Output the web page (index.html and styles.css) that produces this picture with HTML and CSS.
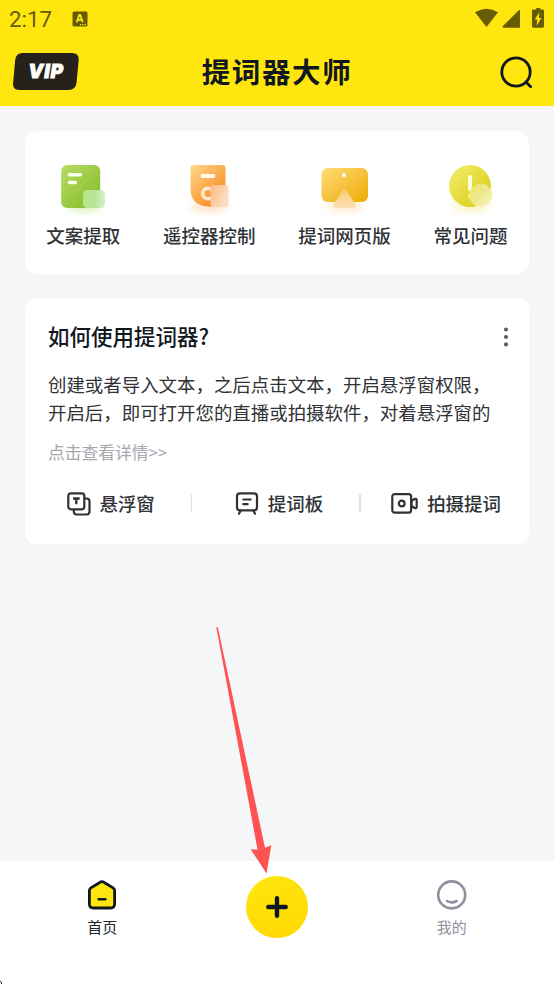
FILE: index.html
```html
<!DOCTYPE html>
<html lang="zh-CN">
<head>
<meta charset="utf-8">
<title>提词器大师</title>
<link rel="stylesheet" href="styles.css">
</head>
<body>
<div class="app">
  <header class="top">
    <div class="status">
      <span class="time">2:17</span>
      <svg class="status-app" width="16" height="16" viewBox="0 0 16 16"><rect x=".5" y=".5" width="15" height="15" rx="1.5" fill="#665c05"/><path d="M4.700 11.200 7.300 4h.9l2.600 7.200M5.800 8.900h3.900" fill="none" stroke="#ffe60f" stroke-width="1.800"/><path d="M8 13.700h1.300m1 0h1.300m1 0h1.300" stroke="#ffe60f" stroke-width="1.200"/></svg>
      <svg class="status-icons" width="72" height="22" viewBox="474 7 72 22"><g fill="#665c05"><path d="M475 12.3Q486.500 5.300 498 12.3L486.500 27Z"/><path d="M520 10V27.700H502.700V26.300L519 10Z"/><path d="M536 9.500h.2V8h4v1.500h2.500q1.300 0 1.300 1.300V26.300q0 1.400-1.300 1.400h-9.400q-1.300 0-1.300-1.400V10.800q0-1.300 1.300-1.300Z"/></g><path d="M539.300 12.500 534.700 19.500h2.600l-.6 6 4.800-7.500h-2.600Z" fill="#ffe60f"/></svg>
    </div>
    <div class="titlebar">
      <div class="vip"><svg width="66" height="38" viewBox="0 0 66 38"><path d="M9.500 0H59q7.200 0 6.700 7L63.500 30q-.8 7-8 7H7Q-.6 37 .1 30L2.200 7Q3 0 9.500 0Z" fill="#26211a"/></svg><span>VIP</span></div>
      <h1>提词器大师</h1>
      <svg class="search" width="36" height="36" viewBox="0 0 36 36" fill="none" stroke="#10171e" stroke-width="2.800"><circle cx="17" cy="17" r="14.200"/><path d="m27 27 4.700 4.700" stroke-linecap="round"/></svg>
    </div>
  </header>

  <main>
    <section class="card features">
      <div class="feature">
        <svg width="60" height="60" viewBox="53 155 60 60"><defs><linearGradient id="green" x1="0" y1="0" x2="1" y2="1"><stop stop-color="#b7dc68"/><stop offset="1" stop-color="#83ba21"/></linearGradient><linearGradient id="mint"><stop stop-color="#b6e48b"/><stop offset=".55" stop-color="#b9e59a"/><stop offset="1" stop-color="#d2f3cb"/></linearGradient><filter id="soft" x="-50%" y="-100%" width="200%" height="300%"><feGaussianBlur stdDeviation="4"/></filter></defs><ellipse cx="84" cy="206" rx="17" ry="6" fill="#a8d850" opacity=".4" filter="url(#soft)"/><rect x="61.200" y="165" width="39" height="43" rx="6" fill="url(#green)"/><rect x="83" y="190" width="22" height="18" rx="4.500" fill="url(#mint)"/><path d="M69.500 174.700H80.500M69.500 182.500H75.300" stroke="#fbfff0" stroke-width="3.600" stroke-linecap="round"/></svg>
        <span>文案提取</span>
      </div>
      <div class="feature">
        <svg width="60" height="60" viewBox="179.5 155 60 60"><defs><linearGradient id="orange" x1="0" y1="0" x2=".8" y2="1"><stop stop-color="#ffd98a"/><stop offset="1" stop-color="#f98519"/></linearGradient><linearGradient id="peach" x1="0" x2="1" y2=".5"><stop stop-color="#fcb985"/><stop offset="1" stop-color="#fddfc5"/></linearGradient></defs><ellipse cx="209" cy="206" rx="18" ry="6" fill="#ffb071" opacity=".4" filter="url(#soft)"/><path d="M191 168q0-3 3-3h29q3 0 3 3v38.500H209q-18-1-18-18Z" fill="url(#orange)"/><path d="M203 176H214" stroke="#fff9ed" stroke-width="3.800" stroke-linecap="round"/><circle cx="208.500" cy="193.500" r="5.300" fill="none" stroke="#ffead2" stroke-width="3.600"/><rect x="211" y="185" width="18" height="22" rx="3.500" fill="url(#peach)"/></svg>
        <span>遥控器控制</span>
      </div>
      <div class="feature">
        <svg width="60" height="60" viewBox="315 155 60 60"><defs><linearGradient id="gold" x1="0" y1="0" x2="1" y2="1"><stop stop-color="#ffdc78"/><stop offset="1" stop-color="#eeaa05"/></linearGradient><linearGradient id="cream" x1="0" y1="0" x2="0" y2="1"><stop stop-color="#f9ce70"/><stop offset="1" stop-color="#fbe0b5"/></linearGradient></defs><ellipse cx="345" cy="206" rx="18" ry="6" fill="#ffc781" opacity=".4" filter="url(#soft)"/><rect x="321.500" y="168" width="46.500" height="34" rx="6" fill="url(#gold)"/><rect x="341.800" y="173" width="4.400" height="4.200" rx="1.500" fill="#fff1dc"/><path d="M342 191.500q2.600-4 5.200 0l8 12.500q1.700 4-2 4H336q-3.500 0-2-4Z" fill="url(#cream)"/></svg>
        <span>提词网页版</span>
      </div>
      <div class="feature">
        <svg width="60" height="60" viewBox="441 155 60 60"><defs><linearGradient id="lime" x1="0" y1="0" x2="1" y2="1"><stop stop-color="#f5ef70"/><stop offset="1" stop-color="#d5ca0c"/></linearGradient><linearGradient id="lemon" x1="0" y1="0" x2="1" y2="1"><stop stop-color="#ebe665"/><stop offset=".5" stop-color="#eee98e"/><stop offset="1" stop-color="#faf7cc"/></linearGradient></defs><ellipse cx="471" cy="206" rx="18" ry="6" fill="#f3e66b" opacity=".4" filter="url(#soft)"/><circle cx="470" cy="186" r="21" fill="url(#lime)"/><path d="M470 177v12" stroke="#fffce0" stroke-width="4" stroke-linecap="round"/><circle cx="470" cy="196" r="1.900" fill="#fbf8c0"/><circle cx="480.800" cy="195.200" r="11.600" fill="url(#lemon)"/></svg>
        <span>常见问题</span>
      </div>
    </section>

    <section class="card guide">
      <div class="guide-head"><h2>如何使用提词器?</h2><svg width="6" height="20" viewBox="0 0 6 20" fill="#59616a"><circle cx="3" cy="2.500" r="2.100"/><circle cx="3" cy="10" r="2.100"/><circle cx="3" cy="17.400" r="2.100"/></svg></div>
      <p>创建或者导入文本，之后点击文本，开启悬浮窗权限，<br>开启后，即可打开您的直播或拍摄软件，对着悬浮窗的</p>
      <div class="more">点击查看详情&gt;&gt;</div>
      <div class="tools">
        <div class="tool">
          <svg width="24" height="24" viewBox="0 0 24 24" fill="none" stroke="#303236" stroke-width="2.200" stroke-linejoin="round"><rect x="1.300" y="1.300" width="16" height="16" rx="2.500"/><path d="M6 6.500h6.700M9.300 6.500v5.700" stroke-width="2.300"/><path d="M17.500 6.500h2q3 0 3 3v10q0 3-3 3H9.800q-3 0-3-3v-2"/></svg>
          <span>悬浮窗</span>
        </div>
        <i></i>
        <div class="tool">
          <svg width="24" height="24" viewBox="0 0 24 24" fill="none" stroke="#303236" stroke-width="2.200" stroke-linecap="round"><rect x="2" y="1.300" width="20" height="17" rx="3"/><path d="M8.300 7.500h7.400M8.300 12.200h4.300M5.500 18.700 4 21.700M18.500 18.700l1.500 3"/></svg>
          <span>提词板</span>
        </div>
        <i></i>
        <div class="tool">
          <svg width="28" height="24" viewBox="0 0 28 24" fill="none" stroke="#303236" stroke-width="2.200"><rect x="2.300" y="2.100" width="18.800" height="18.600" rx="2.500"/><circle cx="11.700" cy="11.500" r="2.900"/><path d="M21.500 9 24.500 7q2.200-.7 2.200 1.500v6q0 2.200-2.200 1.500l-3-2Z" stroke-linejoin="round"/></svg>
          <span>拍摄提词</span>
        </div>
      </div>
    </section>
  </main>

  <nav>
    <div class="tab">
      <svg width="32" height="32" viewBox="0 0 32 32" stroke="#10171e" stroke-linecap="round" stroke-linejoin="round"><path d="M14.200 3.200q1.800-1.200 3.600 0l9.300 5.700q1.500 1 1.500 2.700V25q0 4-4 4H7.400q-4 0-4-4V11.600q0-1.700 1.500-2.700Z" fill="#ffe60f" stroke-width="2.800"/><path d="M12.700 20.200h6.600" stroke-width="2.500"/></svg>
      <span>首页</span>
    </div>
    <div class="tab"><div class="add"><svg width="22" height="22" viewBox="0 0 22 22"><path d="M11 2.300v17.400M2.300 11h17.400" stroke="#10171e" stroke-width="4.400" stroke-linecap="round"/></svg></div></div>
    <div class="tab muted">
      <svg width="32" height="32" viewBox="0 0 32 32" fill="none" stroke="#8d919d" stroke-width="2.600" stroke-linecap="round"><circle cx="15.700" cy="15.900" r="13.500"/><path d="M11 22q4.700 2.800 9.600 0"/></svg>
      <span>我的</span>
    </div>
  </nav>
  <svg class="pointer" width="60" height="250" viewBox="214 625 60 250"><path d="M216.300 627.200 217.800 627 265 847.700 271.300 845.300 266.500 873.500 250.700 849.300 257.500 849.500Z" fill="#ff5353"/></svg>
  <svg class="corner" width="3" height="4" viewBox="0 0 3 4"><path d="M0 1h1v1h1v2H1V2H0Z" fill="#222"/></svg>
</div>
</body>
</html>
```
FILE: styles.css
```css
* { box-sizing: border-box; }
body { margin: 0; font-family: "Noto Sans CJK SC", sans-serif; color: #303236; }
svg { display: block; flex: none; }
.app { position: relative; width: 554px; height: 984px; overflow: hidden; background: #f4f6f8; display: flex; flex-direction: column; }
.top { height: 106px; background: #ffe60f; }
.status { height: 38px; display: flex; align-items: center; padding: 0 8px 0 9px; }
.time { font: 400 22.300px/38px Roboto, sans-serif; color: #665c05; width: 63px; }
.status-app { margin-top: -1px; }
.status-icons { margin-left: auto; margin-top: -2px; }
.titlebar { display: grid; grid-template-columns: 66px 1fr 66px; align-items: center; height: 68px; padding: 0 13px; }
.vip { position: relative; margin-top: -1px; }
.vip span { position: absolute; inset: 0; font: italic 900 19px/37px Inter, sans-serif; color: #fff; text-align: center; letter-spacing: .8px; -webkit-text-stroke: .8px #fff; }
h1 { margin: -2px 0 0; text-align: center; font-size: 28.500px; font-weight: 700; line-height: 40px; letter-spacing: 1.600px; color: #10171e; }
.search { justify-self: end; margin: 1px 6px 0 0; }
main { flex: 1; padding: 25px 25px 0; }
.card { background: #fff; border-radius: 12px; }
.features { height: 143px; display: flex; justify-content: space-around; padding-top: 24px; }
.feature { display: flex; flex-direction: column; align-items: center; font-size: 18.500px; font-weight: 500; line-height: 28px; }
.feature span { margin-top: 6px; }
.guide { height: 246px; margin-top: 24px; padding: 23px 20px 0 23px; }
.guide-head { display: flex; align-items: center; justify-content: space-between; height: 30px; }
.guide-head svg { margin-top: 2px; }
h2 { margin: 0; font-size: 21.500px; font-weight: 500; line-height: 30px; color: #10171e; }
p { margin: 19px 0 0; font-size: 18.450px; line-height: 28px; white-space: nowrap; }
.more { margin-top: 14px; font-size: 16.750px; line-height: 24px; color: #a6a8b0; }
.tools { display: flex; align-items: center; height: 28px; margin-top: 25px; font-size: 18.450px; font-weight: 500; line-height: 28px; }
.tool { display: flex; align-items: center; gap: 9px; }
.tool svg { margin-top: 1px; }
.tools i { width: 1.500px; height: 18px; background: #dde0e8; }
.tool:first-child { margin-left: 18.500px; }
.tools i + .tool { margin-left: 42.500px; }
.tool + i { margin-left: 36px; }
.tools i:last-of-type + .tool { margin-left: 29.500px; }
nav { height: 123px; background: #fff; display: flex; padding: 0 15px; }
.tab { flex: 1; display: flex; flex-direction: column; align-items: center; padding-top: 18px; font-size: 15px; line-height: 24px; color: #20242b; }
.tab span { margin-top: 4px; }
.tab.muted { color: #8d919d; }
.add { width: 62px; height: 62px; margin-top: -3px; border-radius: 50%; background: linear-gradient(160deg, #ffe60f, #ffd700); display: grid; place-items: center; }
.pointer { position: absolute; left: 214px; top: 625px; }
.corner { position: absolute; left: 0; top: 980px; }
```
